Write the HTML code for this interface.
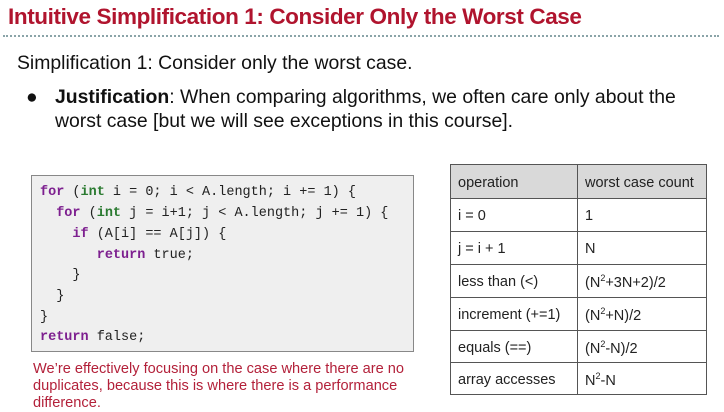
<!DOCTYPE html>
<html><head><style>
body{margin:0;width:724px;height:411px;background:#fff;position:relative;overflow:hidden;font-family:"Liberation Sans",sans-serif}
.t{position:absolute;left:8px;top:4px;font-size:22.5px;font-weight:bold;color:#b0142e;letter-spacing:-0.4px;white-space:nowrap}
.dot{position:absolute;left:3px;top:35px;width:716px;border-top:2px dotted #8aa4a8}
.p{position:absolute;font-size:19.4px;color:#111;white-space:nowrap}
.code{position:absolute;left:31px;top:175px;width:381px;height:175px;background:#efefef;border:1px solid #888;font-family:"Liberation Mono",monospace;font-size:13.5px;color:#222}
.code div{position:absolute;left:8px;white-space:pre}
.k{color:#7d1f8f;font-weight:bold}.g{color:#2a7a30;font-weight:bold}
.note{position:absolute;left:33px;top:361px;font-size:14.6px;line-height:17px;color:#b3213a;width:400px}
table{position:absolute;left:450px;top:164px;border-collapse:collapse;font-size:14.5px;color:#222}
td{border:1px solid #555;height:32px;padding:2px 0 0 7px;box-sizing:border-box}
tr:first-child td{background:#d9d9d9}
sup{font-size:9px}
</style></head><body>
<div class="t">Intuitive Simplification 1: Consider Only the Worst Case</div>
<div class="dot"></div>
<div class="p" style="left:17px;top:52px">Simplification 1: Consider only the worst case.</div>
<div class="p" style="left:26px;top:86px">●</div>
<div class="p" style="left:55px;top:86px"><b>Justification</b>: When comparing algorithms, we often care only about the</div>
<div class="p" style="left:55px;top:110px">worst case [but we will see exceptions in this course].</div>
<div class="code">
<div style="top:9px"><span class="k">for</span> (<span class="g">int</span> i = 0; i &lt; A.length; i += 1) {</div>
<div style="top:30px">  <span class="k">for</span> (<span class="g">int</span> j = i+1; j &lt; A.length; j += 1) {</div>
<div style="top:51px">    <span class="k">if</span> (A[i] == A[j]) {</div>
<div style="top:72px">       <span class="k">return</span> true;</div>
<div style="top:92px">    }</div>
<div style="top:113px">  }</div>
<div style="top:134px">}</div>
<div style="top:154px"><span class="k">return</span> false;</div>
</div>
<div class="note">We’re effectively focusing on the case where there are no duplicates, because this is where there is a performance difference.</div>
<table>
<tr><td style="width:127px;height:34px">operation</td><td style="width:129px">worst case count</td></tr>
<tr><td style="height:33px">i = 0</td><td>1</td></tr>
<tr><td style="height:33px">j = i + 1</td><td>N</td></tr>
<tr><td style="height:33px">less than (&lt;)</td><td>(N<sup>2</sup>+3N+2)/2</td></tr>
<tr><td style="height:33px">increment (+=1)</td><td>(N<sup>2</sup>+N)/2</td></tr>
<tr><td style="height:32px">equals (==)</td><td>(N<sup>2</sup>-N)/2</td></tr>
<tr><td style="height:31px">array accesses</td><td>N<sup>2</sup>-N</td></tr>
</table>
</body></html>
